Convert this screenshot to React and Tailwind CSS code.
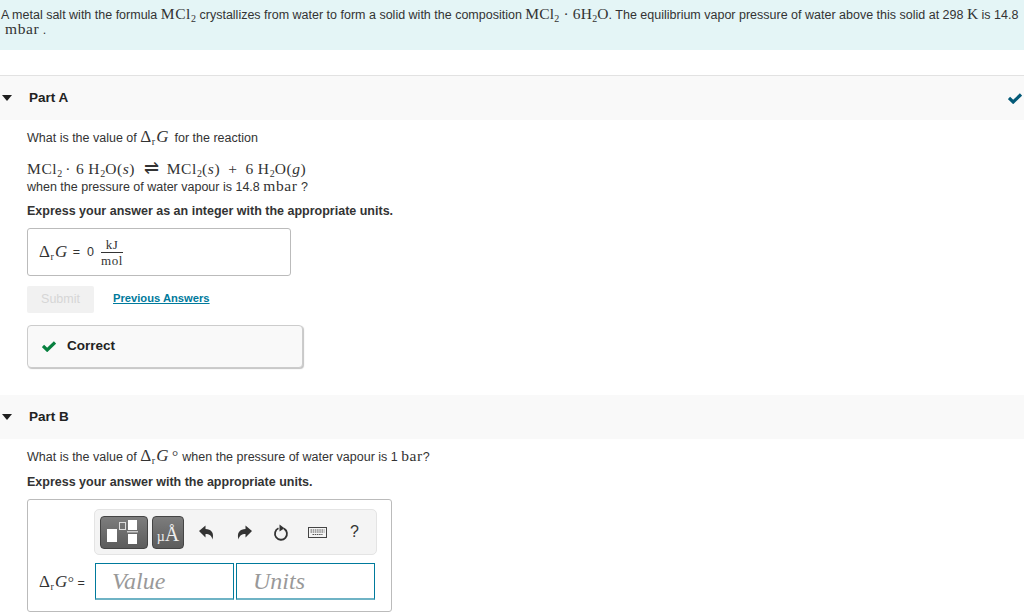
const sans = "font-['Liberation_Sans',Arial,sans-serif]";

function M({ children, className = "tracking-[0.6px]" }) {
  return <span className={`font-['Liberation_Serif',serif] text-[15.5px] ${className}`}>{children}</span>;
}

function Sub({ children }) {
  return <sub className="text-[10px] leading-none align-[-3px] bottom-auto tracking-normal">{children}</sub>;
}

function DeltaG({ naught }) {
  return (
    <M>
      <span className="text-[17px]">Δ</span><Sub>r</Sub>
      <i className="ml-[1px] mr-[2px] text-[17px]">G</i>
      {naught}
    </M>
  );
}

function Triangle() {
  return (
    <svg width="10" height="6" viewBox="0 0 10 6" className="shrink-0">
      <path d="M0 0h10L5 6z" fill="#1f1f1f" />
    </svg>
  );
}

function Check({ color, w = 14, h = 11 }) {
  return (
    <svg width={w} height={h} viewBox="0 0 14 11">
      <path d="M1 5 L5.200 9 L13 1.500" fill="none" stroke={color} strokeWidth="3.200" />
    </svg>
  );
}

function PartHeader({ title, done }) {
  return (
    <div className="h-11 bg-[#f9f9f9] flex items-center pl-[2px] pr-[2px]">
      <Triangle />
      <span className="ml-[17px] text-[13.5px] font-bold text-[#222]">{title}</span>
      {done && (
        <span className="ml-auto flex">
          <Check color="#045a78" />
        </span>
      )}
    </div>
  );
}

function Toolbar() {
  return (
    <div className="w-[283px] h-[46px] ml-[66px] rounded-[5px] border border-[#e4e4e4] bg-[#f4f4f4] flex items-center pl-[5px]">
      <div className="w-[48px] h-[33px] rounded-[4px] border border-[#444] bg-gradient-to-b from-[#7d7d7d] to-[#5c5c5c]">
        <svg width="46" height="31" viewBox="0 0 46 31">
          <rect x="6" y="12" width="10" height="13" fill="#fff" />
          <rect x="18.500" y="5.500" width="6" height="7" fill="none" stroke="#ddd" />
          <rect x="27" y="3" width="9" height="10" fill="#fff" />
          <rect x="26" y="14" width="11" height="1.500" fill="#ccc" />
          <rect x="27" y="17" width="9" height="10" fill="#fff" />
        </svg>
      </div>
      <div className="ml-[4px] w-[32px] h-[33px] rounded-[4px] border border-[#444] bg-gradient-to-b from-[#7d7d7d] to-[#5c5c5c] flex items-end justify-center pb-[4px]">
        <span className="font-['Liberation_Serif',serif] leading-none text-[#eee]">
          <span className="text-[14px]">µ</span>
          <span className="text-[20px]">Å</span>
        </span>
      </div>
      <svg width="16" height="15" viewBox="0 0 16 15" className="ml-[15px]">
        <path d="M0 6 L6.500 0.500 V4 C12 4 15.500 7.500 13.500 14.500 C12.500 10.500 10.500 9 6.500 9 V12.500 Z" fill="#333" />
      </svg>
      <svg width="16" height="15" viewBox="0 0 16 15" className="ml-[21px]">
        <path d="M16 6 L9.500 0.500 V4 C4 4 0.500 7.500 2.500 14.500 C3.500 10.500 5.500 9 9.500 9 V12.500 Z" fill="#333" />
      </svg>
      <svg width="16" height="17" viewBox="0 0 16 17" className="ml-[21px]">
        <path d="M5.500 4.300 A6 6 0 1 0 11 4.600" fill="none" stroke="#333" strokeWidth="1.800" />
        <path d="M6.500 0.500 L11.500 4.200 L6.500 7.500 Z" fill="#333" />
      </svg>
      <svg width="19" height="11" viewBox="0 0 19 11" className="ml-[19px]">
        <rect x="0.500" y="0.500" width="18" height="10" fill="none" stroke="#444" />
        <path d="M2.500 3h14M2.500 5h14M4.500 7.500h10" stroke="#555" strokeWidth="1.200" strokeDasharray="1.500 0.700" />
      </svg>
      <span className="ml-[23px] text-[16px] leading-none text-[#333]">?</span>
    </div>
  );
}

export default function App() {
  return (
    <div className={`${sans} w-[1024px] h-[612px] overflow-hidden bg-white text-[12.5px] text-[#333]`}>
      <div className="h-[50px] bg-[#e4f5f6] pl-[1px] pt-[5px] leading-[17px] whitespace-nowrap">
        <div className="leading-[17px]">
          A metal salt with the formula <M>MCl<Sub>2</Sub></M> crystallizes from water to form a solid with the
          composition <M className="tracking-[0.2px]">MCl<Sub>2</Sub> · 6H<Sub>2</Sub>O</M>. The equilibrium vapor pressure of water above this solid
          at 298 <M className="tracking-normal">K</M> is 14.8
        </div>
        <div className="pl-1 -mt-[4px]"><M>mbar</M> .</div>
      </div>

      <div className="mt-[25px] border-t border-[#e2e2e2]">
        <PartHeader title="Part A" done />
      </div>

      <div className="pl-[27px]">
        <p className="mt-[8px] leading-[18px]">
          What is the value of <DeltaG /> for the reaction
        </p>
        <p className="mt-[14px] h-4 leading-[16px] whitespace-nowrap">
          <M>
            MCl<Sub>2</Sub><span className="mx-[3px]">·</span><span className="ml-[2px]">6</span><span className="ml-[4px]">H<Sub>2</Sub>O(<i>s</i>)</span>
            <span className="inline-block h-[10px] ml-[9px] mr-[7px] text-[18px] leading-[10px]">⇌</span>
            MCl<Sub>2</Sub>(<i>s</i>)<span className="mx-[8px]">+</span>6<span className="ml-[4px]">H<Sub>2</Sub>O(<i>g</i>)</span>
          </M>
        </p>
        <p className="mt-[2px] leading-[14px]">
          when the pressure of water vapour is 14.8 <M>mbar</M> ?
        </p>
        <p className="mt-[10px] leading-[15px] font-bold">Express your answer as an integer with the appropriate units.</p>

        <div className="mt-[9px] w-[264px] h-12 rounded-[3px] border border-[#bbb] flex items-center pl-[11px]">
          <DeltaG />
          <span className="ml-[3px]">=</span>
          <span className="ml-[7px]">0</span>
          <span className="ml-[7px] flex flex-col items-center font-['Liberation_Serif',serif] text-[13px] tracking-[0.5px] leading-[15px]">
            <span className="px-[1px] border-b border-[#333] w-full text-center">kJ</span>
            <span>mol</span>
          </span>
        </div>

        <div className="mt-[10px] flex items-center">
          <div className="w-[67px] h-[27px] rounded-[2px] bg-[#f1f1f1] text-[#d6d6d6] flex items-center justify-center">Submit</div>
          <a className="ml-[19px] mb-[2px] text-[11.2px] font-bold text-[#007a9c] underline">Previous Answers</a>
        </div>

        <div className="mt-[12px] w-[276px] h-[43px] rounded-[4px] border border-[#ccc] bg-[#f9f9f9] shadow-[1px_1px_1px_#c4c4c4] flex items-center pl-[14px]">
          <Check color="#07803f" />
          <span className="ml-[11px] text-[13.5px] font-bold text-[#222]">Correct</span>
        </div>
      </div>

      <div className="mt-[27px]">
        <PartHeader title="Part B" />
      </div>

      <div className="pl-[27px]">
        <p className="mt-[8px] leading-[18px]">
          What is the value of <DeltaG naught={<span className="ml-[1px]">°</span>} /> when the pressure of water vapour is 1 <M>bar</M>?
        </p>
        <p className="mt-[9px] leading-[15px] font-bold">Express your answer with the appropriate units.</p>

        <div className="mt-[9px] w-[365px] h-[113px] rounded-[3px] border border-[#bbb] pt-[9px]">
          <Toolbar />
          <div className="mt-[8px] flex items-center pl-[11px]">
            <span className="w-[56px] shrink-0 whitespace-nowrap">
              <DeltaG naught={<span className="-ml-[2px]">°</span>} />
              <span className="ml-[3px]">=</span>
            </span>
            <div className="w-[139px] h-[37px] border border-[#007a9c] border-b-[#6fb3c5] border-b-2 pl-[16px] flex items-center font-['Liberation_Serif',serif] italic text-[24px] text-[#999]">Value</div>
            <div className="ml-[2px] w-[139px] h-[37px] border border-[#007a9c] border-b-[#6fb3c5] border-b-2 pl-[16px] flex items-center font-['Liberation_Serif',serif] italic text-[24px] text-[#999]">Units</div>
          </div>
        </div>
      </div>
    </div>
  );
}
